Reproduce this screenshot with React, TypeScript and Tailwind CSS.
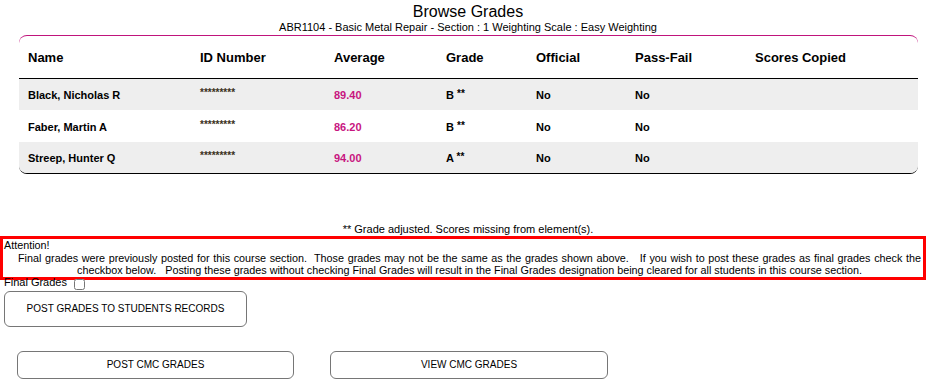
const rows = [
  { name: "Black, Nicholas R", id: "*********", avg: "89.40", grade: "B", official: "No", pf: "No", shade: true },
  { name: "Faber, Martin A", id: "*********", avg: "86.20", grade: "B", official: "No", pf: "No", shade: false },
  { name: "Streep, Hunter Q", id: "*********", avg: "94.00", grade: "A", official: "No", pf: "No", shade: true },
];

const cols = "grid grid-cols-[172px_134px_112px_90px_99px_120px_1fr] pl-[9px]";

export default function App() {
  return (
    <div className="w-[936px] h-[387px] bg-white text-black font-['Liberation_Sans',Arial,sans-serif] overflow-hidden">
      {/* Title */}
      <div className="text-center pt-[3px]">
        <h1 className="text-[16px] leading-[18px]">Browse Grades</h1>
        <p className="text-[11px] leading-[13px]">
          ABR1104 - Basic Metal Repair - Section : 1 Weighting Scale : Easy Weighting
        </p>
      </div>

      {/* Table */}
      <div className="mx-[19px] mt-[1px] w-[899px] rounded-[8px] border-t border-b border-t-[#c0147c] border-b-black">
        <div className={`${cols} h-[43px] items-center border-b border-black text-[13px] font-bold pt-[1px]`}>
          <span>Name</span>
          <span>ID Number</span>
          <span>Average</span>
          <span>Grade</span>
          <span>Official</span>
          <span>Pass-Fail</span>
          <span>Scores Copied</span>
        </div>
        {rows.map((r, i) => (
          <div
            key={r.name}
            className={`${cols} ${i === 1 ? "h-[32px]" : "h-[31px]"} items-center pt-[2px] text-[11px] font-bold ${
              r.shade ? "bg-[#eeeeee]" : "bg-white"
            } ${i === 2 ? "rounded-b-[8px]" : ""}`}
          >
            <span>{r.name}</span>
            <span className="text-[10px] text-[#3a3020] -translate-y-[3px]">{r.id}</span>
            <span className="text-[#c8157f]">{r.avg}</span>
            <span>
              {r.grade} <span className="text-[10px] relative -top-[2px]">**</span>
            </span>
            <span>{r.official}</span>
            <span>{r.pf}</span>
            <span></span>
          </div>
        ))}
      </div>

      <p className="mt-[49px] text-center text-[11px] leading-[13px]">
        ** Grade adjusted. Scores missing from element(s).
      </p>

      {/* Attention box */}
      <div className="w-[926px] border-[3px] border-[#ff0000] pl-[1px] text-[10.8px] leading-[12.5px]">
        <div>Attention!</div>
        <p className="text-justify [text-align-last:center] whitespace-pre-wrap pl-[14px] pr-[2px]">
          {"Final grades were previously posted for this course section.  Those grades may not be the same as the grades shown above.   If you wish to post these grades as final grades check the checkbox below.   Posting these grades without checking Final Grades will result in the Final Grades designation being cleared for all students in this course section."}
        </p>
      </div>

      <label className="-mt-[3px] flex items-start gap-[7px] pl-[4px] text-[11px] leading-[11px] h-[14px]">
        <span>Final Grades</span>
        <input type="checkbox" className="w-[11px] h-[11px] mt-[2px]" />
      </label>

      <div className="pl-[4px]">
        <button className="w-[243px] h-[36px] rounded-[6px] border border-[#767676] bg-white text-[10px] text-black">
          POST GRADES TO STUDENTS RECORDS
        </button>
      </div>

      <div className="flex gap-[36px] pl-[17px] pt-[24px]">
        <button className="w-[277px] h-[28px] rounded-[6px] border border-[#767676] bg-white text-[10px] text-black">
          POST CMC GRADES
        </button>
        <button className="w-[278px] h-[28px] rounded-[6px] border border-[#767676] bg-white text-[10px] text-black">
          VIEW CMC GRADES
        </button>
      </div>
    </div>
  );
}
